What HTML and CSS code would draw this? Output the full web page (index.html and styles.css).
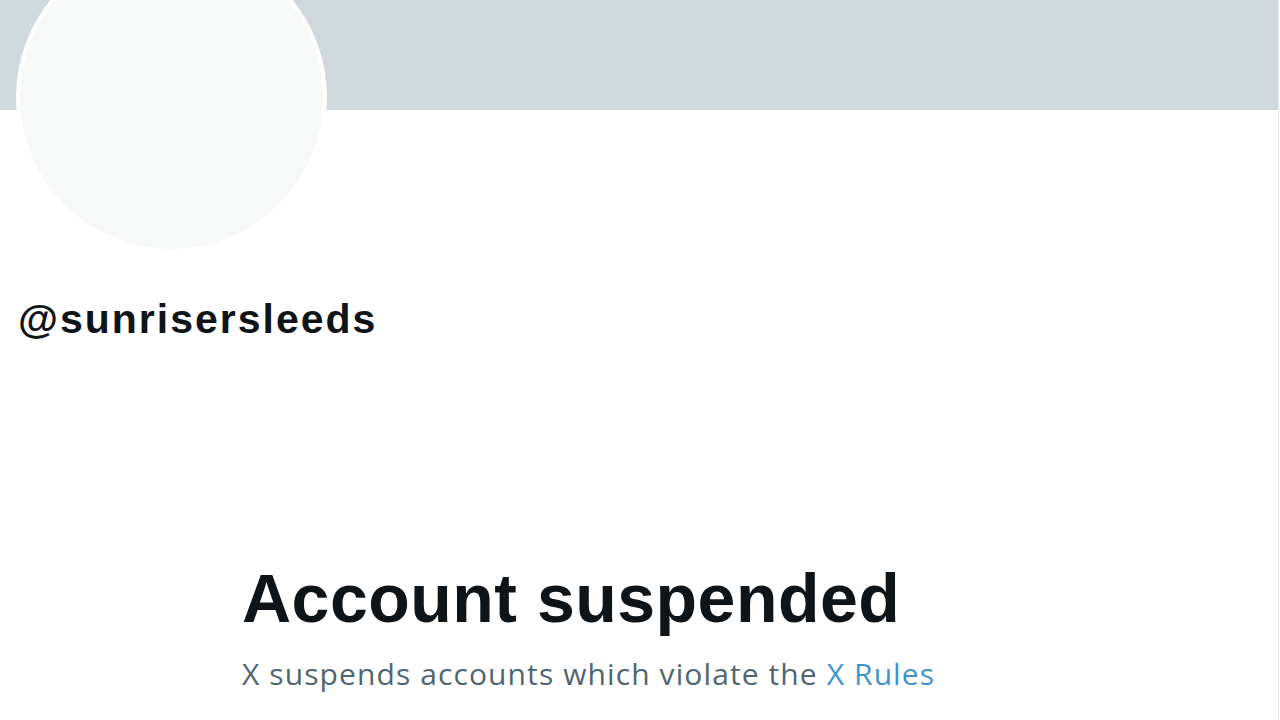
FILE: index.html
```html
<!DOCTYPE html>
<html lang="en">
<head>
<meta charset="utf-8">
<title>@sunrisersleeds / X</title>
<link rel="stylesheet" href="styles.css">
</head>
<body>
<main class="column">
  <div class="banner"></div>
  <div class="avatar"></div>
  <section class="profile">
    <div class="handle">@sunrisersleeds</div>
  </section>
  <section class="suspended">
    <h1 class="title">Account suspended</h1>
    <p class="desc">X suspends accounts which violate the <a class="link" href="#">X Rules</a></p>
  </section>
</main>
</body>
</html>
```

FILE: styles.css
```css
html, body {
  margin: 0;
  padding: 0;
  background: #ffffff;
  height: 720px;
  overflow: hidden;
}

.column {
  position: relative;
  width: 1278px;
  height: 720px;
  border-right: 1px solid #e6eaec;
  background: #ffffff;
}

.banner {
  height: 110px;
  background: #cfd9de;
}

.avatar {
  position: absolute;
  left: 16px;
  top: -58px;
  width: 303px;
  height: 303px;
  border-radius: 50%;
  border: 4px solid #ffffff;
  background: #f7f9f9;
}

.profile {
  padding: 185px 0 0 18px;
}

.handle {
  font-family: "Liberation Sans", Arial, sans-serif;
  font-weight: 700;
  font-size: 41px;
  line-height: 48px;
  letter-spacing: 2px;
  color: #0f1419;
}

.suspended {
  padding: 215px 0 0 242px;
}

.title {
  margin: 0;
  font-family: "Liberation Sans", Arial, sans-serif;
  font-weight: 700;
  font-size: 68px;
  line-height: 80px;
  letter-spacing: 0.5px;
  color: #0f1419;
}

.desc {
  margin: 18px 0 0 0;
  font-family: "Open Sans", "Liberation Sans", sans-serif;
  font-size: 30px;
  line-height: 36px;
  letter-spacing: 1.1px;
  color: #536471;
}

.link {
  color: #3f94cf;
  text-decoration: none;
}
```
